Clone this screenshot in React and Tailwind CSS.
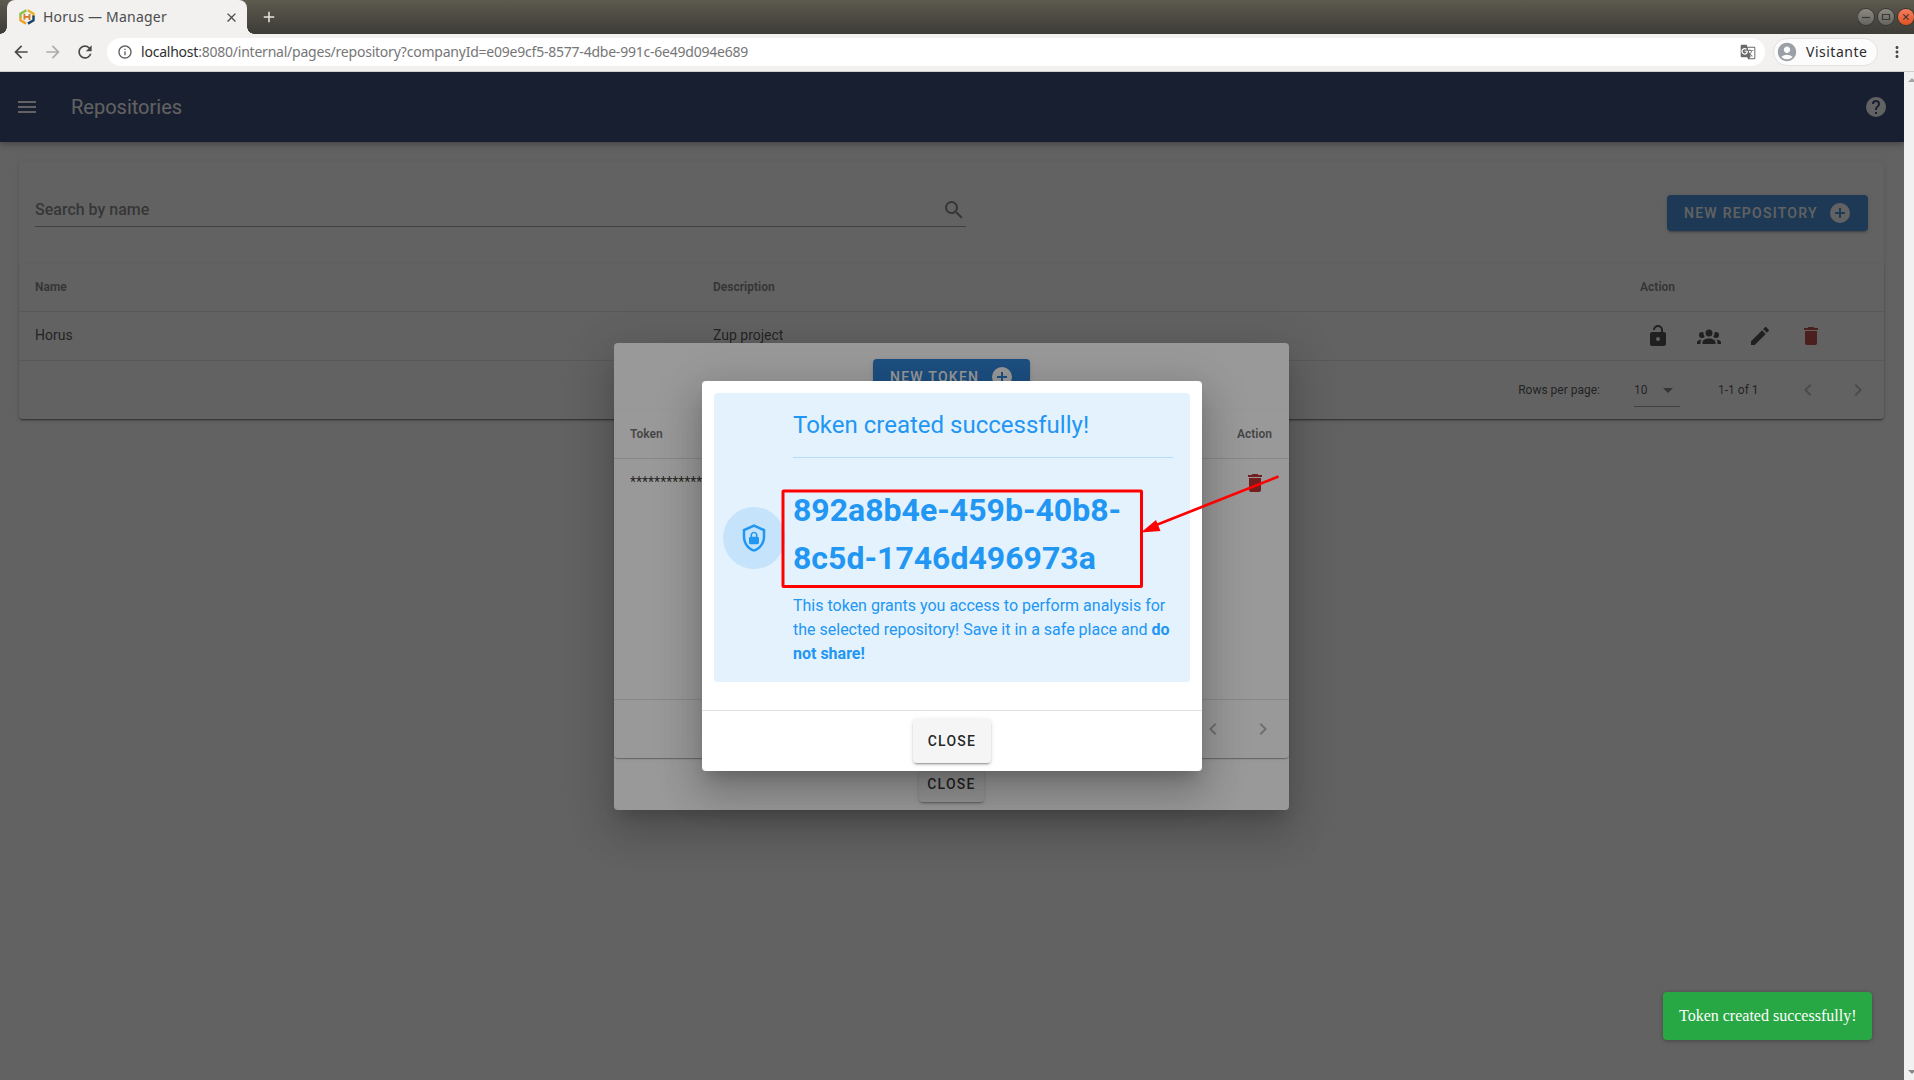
import React from "react";
import { MdArrowBack, MdArrowForward, MdRefresh, MdInfoOutline, MdAccountCircle, MdMoreVert, MdGTranslate, MdAdd, MdClose } from "react-icons/md";

const paths = {
  menu: "M3,6H21V8H3V6M3,11H21V13H3V11M3,16H21V18H3V16Z",
  help: "M15.07,11.25L14.17,12.17C13.45,12.89 13,13.5 13,15H11V14.5C11,13.39 11.45,12.39 12.17,11.67L13.41,10.41C13.78,10.05 14,9.55 14,9C14,7.89 13.1,7 12,7A2,2 0 0,0 10,9H8A4,4 0 0,1 12,5A4,4 0 0,1 16,9C16,9.88 15.64,10.67 15.07,11.25M13,19H11V17H13M12,2A10,10 0 0,0 2,12A10,10 0 0,0 12,22A10,10 0 0,0 22,12C22,6.47 17.5,2 12,2Z",
  search: "M9.5,3A6.5,6.5 0 0,1 16,9.5C16,11.11 15.41,12.59 14.44,13.73L14.71,14H15.5L20.5,19L19,20.5L14,15.5V14.71L13.73,14.44C12.59,15.41 11.11,16 9.5,16A6.5,6.5 0 0,1 3,9.5A6.5,6.5 0 0,1 9.5,3M9.5,5C7,5 5,7 5,9.5C5,12 7,14 9.5,14C12,14 14,12 14,9.5C14,7 12,5 9.5,5Z",
  plus: "M17,13H13V17H11V13H7V11H11V7H13V11H17M12,2A10,10 0 0,0 2,12A10,10 0 0,0 12,22A10,10 0 0,0 22,12A10,10 0 0,0 12,2Z",
  unlock: "M18,8A2,2 0 0,1 20,10V20A2,2 0 0,1 18,22H6C4.89,22 4,21.1 4,20V10A2,2 0 0,1 6,8H15V6A3,3 0 0,0 12,3A3,3 0 0,0 9,6H7A5,5 0 0,1 12,1A5,5 0 0,1 17,6V8H18M12,17A2,2 0 0,0 14,15A2,2 0 0,0 12,13A2,2 0 0,0 10,15A2,2 0 0,0 12,17Z",
  group: "M12,5.5A3.5,3.5 0 0,1 15.5,9A3.5,3.5 0 0,1 12,12.5A3.5,3.5 0 0,1 8.5,9A3.5,3.5 0 0,1 12,5.5M5,8C5.56,8 6.08,8.15 6.53,8.42C6.38,9.85 6.8,11.27 7.66,12.38C7.16,13.34 6.16,14 5,14A3,3 0 0,1 2,11A3,3 0 0,1 5,8M19,8A3,3 0 0,1 22,11A3,3 0 0,1 19,14C17.84,14 16.84,13.34 16.34,12.38C17.2,11.27 17.62,9.85 17.47,8.42C17.92,8.15 18.44,8 19,8M5.5,18.25C5.5,16.18 8.41,14.5 12,14.5C15.59,14.5 18.5,16.18 18.5,18.25V20H5.5V18.25M0,20V18.5C0,17.11 1.89,15.94 4.45,15.6C3.86,16.28 3.5,17.22 3.5,18.25V20H0M24,20H20.5V18.25C20.5,17.22 20.14,16.28 19.55,15.6C22.11,15.94 24,17.11 24,18.5V20Z",
  pencil: "M20.71,7.04C21.1,6.65 21.1,6 20.71,5.63L18.37,3.29C18,2.9 17.35,2.9 16.96,3.29L15.12,5.12L18.87,8.87M3,17.25V21H6.75L17.81,9.93L14.06,6.18L3,17.25Z",
  trash: "M19,4H15.5L14.5,3H9.5L8.5,4H5V6H19M6,19A2,2 0 0,0 8,21H16A2,2 0 0,0 18,19V7H6V19Z",
  caret: "M7,10L12,15L17,10H7Z",
  left: "M15.41,16.58L10.83,12L15.41,7.41L14,6L8,12L14,18L15.41,16.58Z",
  right: "M8.59,16.58L13.17,12L8.59,7.41L10,6L16,12L10,18L8.59,16.58Z",
  shield: "M21,11C21,16.55 17.16,21.74 12,23C6.84,21.74 3,16.55 3,11V5L12,1L21,5V11M12,21C15.75,20 19,15.54 19,11.22V6.3L12,3.18L5,6.3V11.22C5,15.54 8.25,20 12,21M14.8,11V9.5C14.8,8.1 13.4,7 12,7C10.6,7 9.2,8.1 9.2,9.5V11C8.6,11 8,11.6 8,12.2V15.7C8,16.4 8.6,17 9.2,17H14.7C15.4,17 16,16.4 16,15.8V12.3C16,11.6 15.4,11 14.8,11M13.5,11H10.5V9.5C10.5,8.7 11.2,8.2 12,8.2C12.8,8.2 13.5,8.7 13.5,9.5V11Z",
};

function Icon({ name, className = "size-6" }) {
  return (
    <svg viewBox="0 0 24 24" fill="currentColor" className={"shrink-0 " + className}>
      <path d={paths[name]} />
    </svg>
  );
}

const raised = "shadow-[0_3px_1px_-2px_rgba(0,0,0,0.2),0_2px_2px_0_rgba(0,0,0,0.14),0_1px_5px_0_rgba(0,0,0,0.12)]";
const flat = "shadow-[0_2px_1px_-1px_rgba(0,0,0,0.2),0_1px_1px_0_rgba(0,0,0,0.14),0_1px_3px_0_rgba(0,0,0,0.12)]";
const floating = "shadow-[0_11px_15px_-7px_rgba(0,0,0,0.2),0_24px_38px_3px_rgba(0,0,0,0.14),0_9px_46px_8px_rgba(0,0,0,0.12)]";

function PrimaryButton({ children, className }) {
  return (
    <button className={"flex h-9 items-center justify-between rounded bg-[#1976d2] pl-[17px] pr-4 text-sm font-medium tracking-[1.25px] text-white whitespace-nowrap " + raised + " " + className}>
      <span>{children}</span>
      <Icon name="plus" />
    </button>
  );
}

function CloseButton({ className }) {
  return (
    <button className={"flex items-center justify-center rounded bg-[#f5f5f5] text-sm font-medium tracking-[1.25px] text-black/87 " + raised + " " + className}>
      CLOSE
    </button>
  );
}

function WindowButton({ close, children }) {
  return (
    <span className={"flex size-4 shrink-0 items-center justify-center rounded-full ring-1 ring-[#373632] " + (close ? "bg-linear-to-b from-[#f47c5c] to-[#e2511f]" : "bg-linear-to-b from-[#8a8982] to-[#65645e]")}>
      <svg viewBox="0 0 16 16" className="size-4" fill="none" stroke="#3a3934" strokeWidth="1.2">{children}</svg>
    </span>
  );
}

function Browser() {
  return (
    <div className="shrink-0 font-['Noto_Sans',sans-serif]">
      <div className="flex h-[34px] bg-linear-to-b from-[#5d5a4e] to-[#3d3c37]">
        <div className="flex w-[7px] items-end bg-transparent">
          <span className="size-[7px] bg-[radial-gradient(circle_at_0_0,transparent_6.5px,#f2f1f0_7px)]" />
        </div>
        <div className="flex w-[240px] items-center rounded-t-lg bg-[#f2f1f0] pr-2 pl-3">
          <svg viewBox="0 0 16 16" className="size-4 shrink-0" fill="none" strokeWidth="2.4">
            <path d="M7.4 1.3 1.5 4.6V9" stroke="#8cc04b" />
            <path d="M1.5 8v3.4l5.6 3.2" stroke="#f0a22a" />
            <path d="M5.4 4.8v6M5.2 8l5.4-.3M10.5 5v6" stroke="#d77a25" strokeWidth="1.8" />
            <path d="M8.700 1.3l5.800 3.300V8" stroke="#e8b42e" />
            <path d="M14.500 6.500v4.900l-5.600 3.200" stroke="#16466e" />
          </svg>
          <span className="ml-2 pb-[2px] text-[14px] tracking-[0.22px] whitespace-nowrap text-[#4c4c4c]">Horus — Manager</span>
          <MdClose className="ml-auto size-[15px] text-[#4a4a4a]" />
        </div>
        <div className="flex w-[7px] items-end">
          <span className="size-[7px] bg-[radial-gradient(circle_at_100%_0,transparent_6.5px,#f2f1f0_7px)]" />
        </div>
        <MdAdd className="mt-2 ml-[6px] size-[18px] text-[#e8e6e0]" />
        <div className="ml-auto flex w-[56px] shrink-0 items-center gap-1 overflow-hidden">
          <WindowButton><path d="M4 8.5h8" /></WindowButton>
          <WindowButton><path d="M4.5 5.5h7v5h-7z" /></WindowButton>
          <WindowButton close><path d="m5.3 5.3 5.4 5.4m0-5.4-5.4 5.4" /></WindowButton>
        </div>
      </div>
      <div className="flex h-[38px] items-center border-b border-[#cfcecc] bg-[#f2f1f0] pt-px pb-[2px] pl-[11px]">
        <MdArrowBack className="size-5 text-[#4a4a4a]" />
        <MdArrowForward className="ml-3 size-5 text-[#adacaa]" />
        <MdRefresh className="ml-3 size-5 text-[#4a4a4a]" />
        <div className="ml-3 flex h-7 w-[1658px] items-center rounded-full bg-white pr-[9px] pl-[10px]">
          <MdInfoOutline className="size-4 text-[#5f5f5f]" />
          <span className="ml-2 pb-[2px] text-[14px] tracking-[-0.225px] whitespace-nowrap text-[#767676]">
            <span className="text-[#2f2f2f]">localhost</span>:8080/internal/pages/repository?companyId=e09e9cf5-8577-4dbe-991c-6e49d094e689
          </span>
          <MdGTranslate className="ml-auto size-4 text-[#6a6a6a]" />
        </div>
        <div className="ml-2 flex h-7 w-[105px] items-center rounded-full border border-[#e3e2e1] bg-[#fcfcfc] pl-[2px]">
          <MdAccountCircle className="size-[22px] text-[#9aa0a6]" />
          <span className="ml-2 pb-px text-[14px] tracking-[0.5px] text-[#2b2b2b]">Visitante</span>
        </div>
        <MdMoreVert className="ml-[10px] size-[18px] text-[#4a4a4a]" />
      </div>
    </div>
  );
}

function Repositories() {
  return (
    <div className="flex h-full flex-col bg-white">
      <header className="z-10 flex h-[70px] shrink-0 items-center bg-[#061e58] pr-4 pl-[15px] text-white shadow-[0_2px_4px_-1px_rgba(0,0,0,0.2),0_4px_5px_0_rgba(0,0,0,0.14),0_1px_10px_0_rgba(0,0,0,0.12)]">
        <Icon name="menu" />
        <h1 className="ml-8 text-xl">Repositories</h1>
        <Icon name="help" className="ml-auto size-6" />
      </header>
      <section className={"mx-5 mt-5 ml-[19px] flex h-[257px] flex-col rounded bg-white " + raised}>
        <div className="flex h-[102px] shrink-0 items-start justify-between pr-4 pl-4">
          <div className="mt-[30px] flex h-[35px] w-[931px] items-center justify-between border-b border-[#8c8c8c] pt-[2px] text-black/60">
            <span className="text-base font-medium">Search by name</span>
            <Icon name="search" className="size-6" />
          </div>
          <PrimaryButton className="mt-[33px] w-[201px]">NEW REPOSITORY</PrimaryButton>
        </div>
        <div className={"flex h-[155px] flex-col rounded bg-white " + flat}>
          <div className="flex h-12 shrink-0 items-center border-b border-black/12 pb-[2px] pl-4 text-xs font-bold text-black/60">
            <span className="w-[678px]">Name</span>
            <span className="w-[927px]">Description</span>
            <span>Action</span>
          </div>
          <div className="flex h-[49px] shrink-0 items-center border-b border-black/12 pl-4 text-sm text-black/87">
            <span className="w-[678px] pb-[2px]">Horus</span>
            <span className="w-[933px] pb-[2px]">Zup project</span>
            <span className="flex gap-[27px] text-black/87">
              <Icon name="unlock" />
              <Icon name="group" />
              <Icon name="pencil" />
              <Icon name="trash" className="size-6 text-[#b71c1c]" />
            </span>
          </div>
          <div className="flex flex-1 items-center justify-end pr-[14px] text-xs text-black/87">
            <span>Rows per page:</span>
            <span className="mt-px ml-[34px] flex h-8 w-[46px] items-center justify-between border-b border-[#8c8c8c]">
              10<Icon name="caret" className="size-6 text-black/60" />
            </span>
            <span className="ml-[38px] w-[78px]">1-1 of 1</span>
            <Icon name="left" className="size-6 text-black/30" />
            <Icon name="right" className="ml-[26px] size-6 text-black/30" />
          </div>
        </div>
      </section>
    </div>
  );
}

function TokensDialog() {
  return (
    <div className={"flex h-[467px] w-[675px] flex-col rounded bg-white " + floating}>
      <div className="flex h-[67px] shrink-0 justify-center pt-4">
        <PrimaryButton className="w-[157px]">NEW TOKEN</PrimaryButton>
      </div>
      <div className={"flex h-[348px] shrink-0 flex-col rounded bg-white " + flat}>
        <div className="flex h-[49px] shrink-0 items-center justify-between border-b border-black/12 pr-[17px] pl-4 text-xs font-bold text-black/60">
          <span>Token</span>
          <span>Action</span>
        </div>
        <div className="flex h-12 shrink-0 items-center justify-between pr-[22px] pl-4 text-sm text-black/87">
          <span className="pb-[2px]">********************************</span>
          <Icon name="trash" className="size-6 text-[#b71c1c]" />
        </div>
        <div className="mt-auto flex h-[59px] items-center justify-end gap-[26px] border-t border-black/12 pr-[14px] text-black/30">
          <Icon name="left" />
          <Icon name="right" />
        </div>
      </div>
      <div className="flex justify-center pt-2">
        <CloseButton className="h-9 w-[65px]" />
      </div>
    </div>
  );
}

function CreatedDialog() {
  return (
    <div className={"flex h-[390px] w-[500px] flex-col rounded bg-white " + floating}>
      <div className="m-3 flex h-[289px] items-center rounded bg-[#e4f2fe] text-[#2196f3]">
        <div className="ml-[9px] flex size-[62px] shrink-0 items-center justify-center rounded-full bg-[#c5e4fb]">
          <Icon name="shield" className="mr-px size-[30px]" />
        </div>
        <div className="ml-2 h-full w-[381px] pt-4">
          <h2 className="text-2xl leading-8">Token created successfully!</h2>
          <hr className="mt-4 mb-7 w-[380px] border-t border-[#b7dcfa]" />
          <p className="text-[32px] leading-[48px] font-bold">892a8b4e-459b-40b8-<br />8c5d-1746d496973a</p>
          <p className="mt-3 text-base leading-6">This token grants you access to perform analysis for the selected repository! Save it in a safe place and <b>do not share!</b></p>
        </div>
      </div>
      <div className="mt-auto flex h-[61px] items-start justify-center border-t border-black/12 pt-2">
        <CloseButton className="h-11 w-[78px]" />
      </div>
    </div>
  );
}

export default function App() {
  return (
    <div className="flex h-[1080px] w-[1914px] flex-col overflow-hidden">
      <Browser />
      <div className="flex min-h-0 flex-1">
        <main className="relative w-[1904px] overflow-hidden font-[Roboto,sans-serif]">
          <Repositories />
          <div className="absolute inset-0 z-20 flex items-center justify-center bg-[#212121]/46 pr-px">
            <TokensDialog />
          </div>
          <div className="absolute inset-0 z-30 flex items-center justify-center bg-[#212121]/46">
            <CreatedDialog />
          </div>
          <svg className="absolute top-[410px] left-[775px] z-40 h-[115px] w-[520px]" viewBox="775 482 520 115" overflow="visible">
            <rect x="783" y="491" width="358.5" height="95.5" rx="0.5" fill="none" stroke="#fe0000" strokeWidth="3" />
            <path d="M1278.500 476.500 1155 525.500" stroke="#fe0000" strokeWidth="2.700" />
            <path d="M1141 532.500 1156 520 1160.500 531Z" fill="#fe0000" />
          </svg>
          <div className="absolute right-8 bottom-10 z-40 flex h-12 w-[209px] items-center rounded bg-[#28a745] pl-4 font-['Liberation_Serif',serif] text-base whitespace-nowrap text-white shadow-[0_1px_4px_rgba(0,0,0,0.3)]">
            Token created successfully!
          </div>
        </main>
        <div className="flex w-[10px] flex-col items-end justify-between overflow-hidden bg-[#f1f1f1] pt-[6px] pb-[6px]">
          <svg className="h-1 w-[6px]" viewBox="0 0 6 4"><path d="M0 4 4 0 8 4Z" fill="#a3a3a3" /></svg>
          <svg className="h-1 w-[6px]" viewBox="0 0 6 4"><path d="M0 0 4 4 8 0Z" fill="#888" /></svg>
        </div>
      </div>
    </div>
  );
}
